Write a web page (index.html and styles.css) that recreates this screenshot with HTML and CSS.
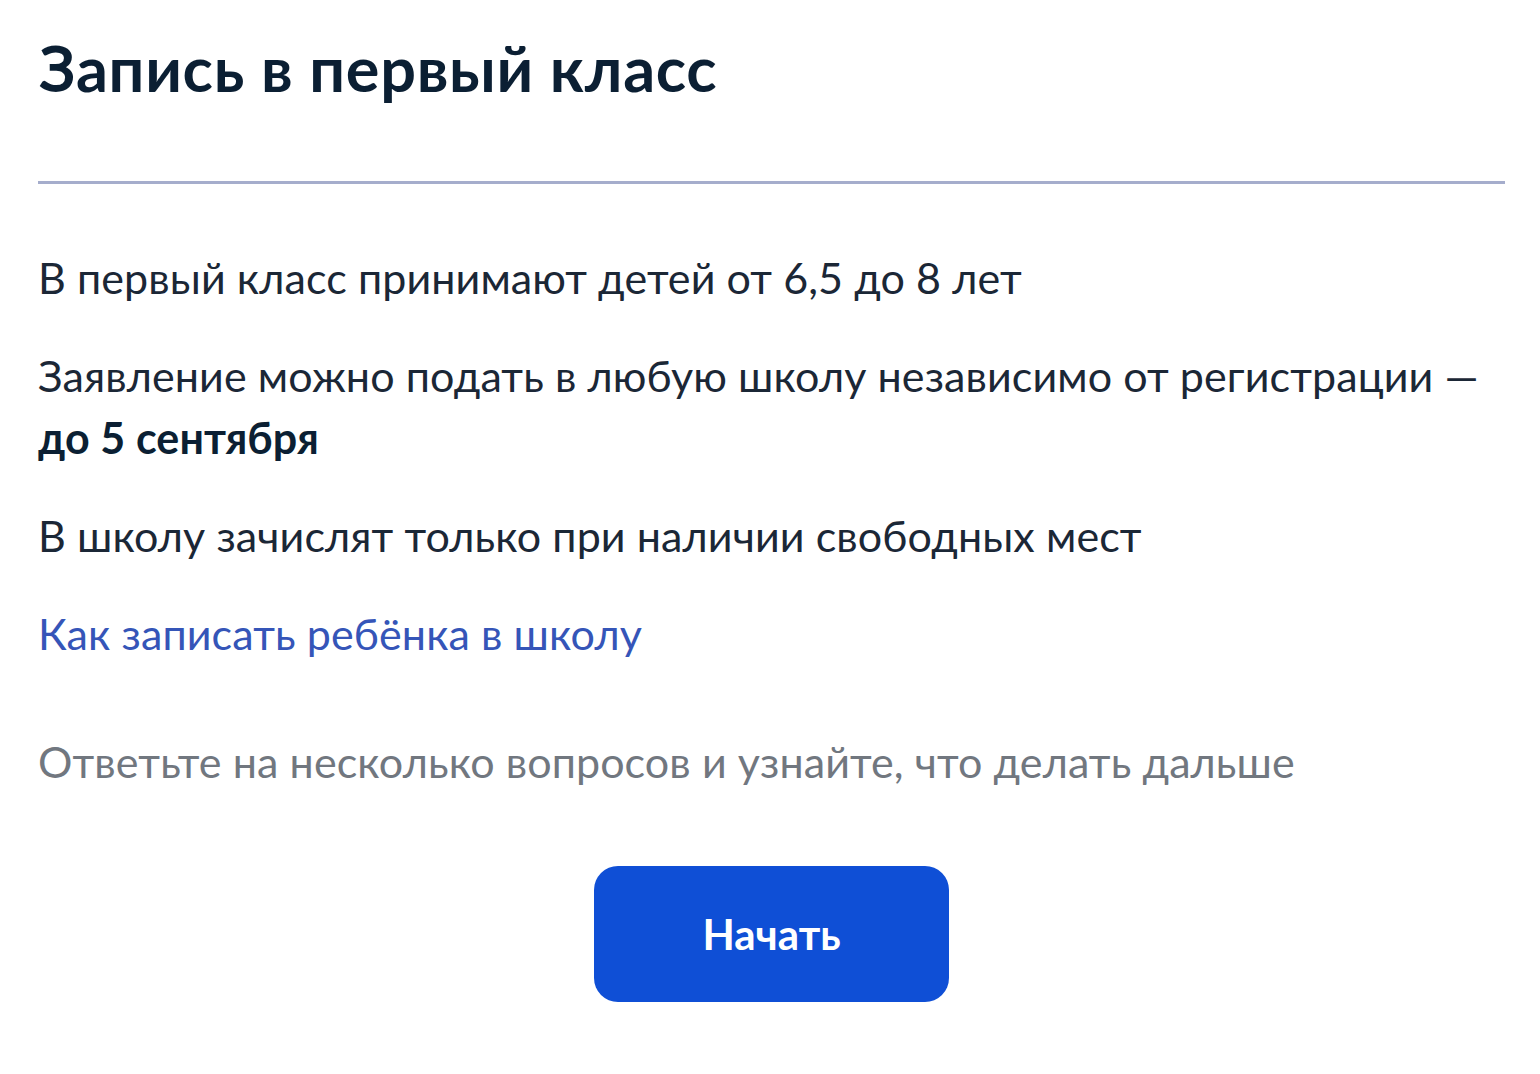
FILE: index.html
```html
<!DOCTYPE html>
<html lang="ru">
<head>
    <meta charset="UTF-8">
    <meta name="viewport" content="width=device-width, initial-scale=1.0">
    <title>Запись в первый класс</title>
    <link rel="stylesheet" href="styles.css">
</head>
<body>

    <div class="page">
        <h1 class="title">Запись в первый класс</h1>

        <div class="divider"></div>

        <div class="info">
            <p>В первый класс принимают детей от 6,5 до 8 лет</p>
            <p>Заявление можно подать в любую школу независимо от регистрации —<br><b>до 5 сентября</b></p>
            <p>В школу зачислят только при наличии свободных мест</p>
            <p><a href="#" class="link">Как записать ребёнка в школу</a></p>
        </div>

        <p class="hint">Ответьте на несколько вопросов и узнайте, что делать дальше</p>

        <div class="button-container">
            <button id="start">Начать</button>
        </div>
    </div>

</body>
</html>
```

FILE: styles.css
```css
body {
    font-family: Lato, "Noto Sans", sans-serif;
    margin: 0;
    background-color: #ffffff;
    color: #1b2736;
}

.page {
    padding: 31px 35px 40px 38px;
}

.title {
    font-size: 63px;
    line-height: 74px;
    font-weight: 700;
    letter-spacing: 0.7px;
    margin: 0 0 0 1px;
    color: #0b1f33;
}

.divider {
    height: 3px;
    background-color: #a5adcc;
    margin-top: 76px;
}

.info {
    margin-top: 63px;
}

.info p,
.hint {
    font-size: 43px;
    line-height: 62px;
    letter-spacing: 0.1px;
    margin: 0 0 36px 0;
}

.info p:last-child {
    margin-bottom: 0;
}

.info b {
    font-weight: 700;
    color: #0b1f33;
}

.link {
    color: #3555b8;
    text-decoration: none;
}

.hint {
    color: #71777f;
    margin-top: 66px;
    margin-bottom: 0;
}

.button-container {
    display: flex;
    justify-content: center;
    margin-top: 73px;
}

button {
    width: 355px;
    height: 136px;
    font-family: inherit;
    font-size: 42px;
    font-weight: 700;
    color: #ffffff;
    background-color: #0f4fd6;
    border: none;
    border-radius: 24px;
    cursor: pointer;
}

button:hover {
    background-color: #0b45bd;
}
```
